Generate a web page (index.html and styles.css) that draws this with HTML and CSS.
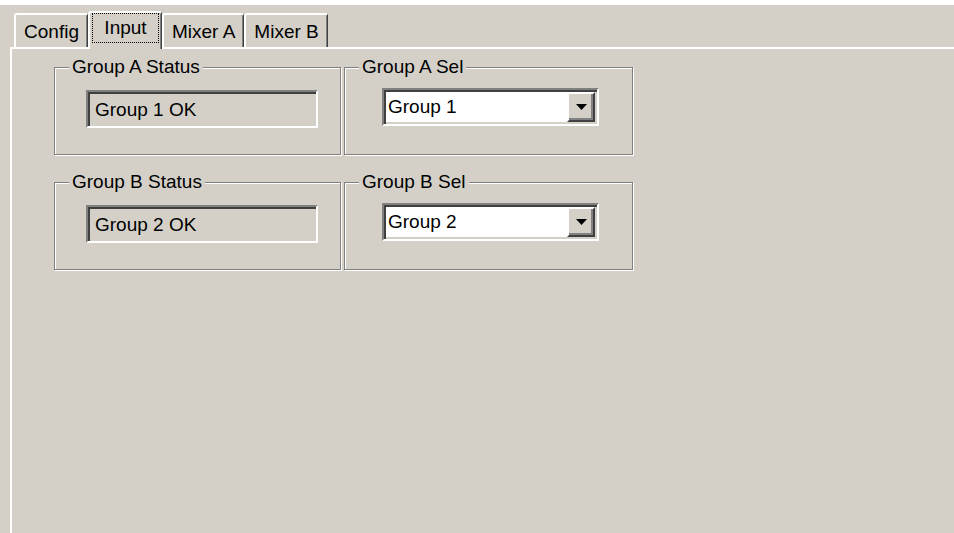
FILE: index.html
```html
<!DOCTYPE html>
<html lang="en">
<head>
<meta charset="utf-8">
<title>Input</title>
<link rel="stylesheet" href="styles.css">
</head>
<body>
<div class="top-edge"></div>

<div class="tabstrip">
  <div class="tab">Config</div>
  <div class="tab tab-active"><span class="tab-focus">Input</span></div>
  <div class="tab">Mixer A</div>
  <div class="tab">Mixer B</div>
</div>

<div class="panel">
  <div class="group-row">
    <fieldset class="group group-status">
      <legend>Group A Status</legend>
      <div class="status-field">Group 1 OK</div>
    </fieldset>
    <fieldset class="group group-sel">
      <legend>Group A Sel</legend>
      <div class="combo">
        <span class="combo-value">Group 1</span>
        <span class="combo-btn"><svg class="combo-arrow" width="11" height="6" viewBox="0 0 11 6"><path d="M0 0h11L5.5 6z"/></svg></span>
      </div>
    </fieldset>
  </div>

  <div class="group-row">
    <fieldset class="group group-status">
      <legend>Group B Status</legend>
      <div class="status-field">Group 2 OK</div>
    </fieldset>
    <fieldset class="group group-sel">
      <legend>Group B Sel</legend>
      <div class="combo">
        <span class="combo-value">Group 2</span>
        <span class="combo-btn"><svg class="combo-arrow" width="11" height="6" viewBox="0 0 11 6"><path d="M0 0h11L5.5 6z"/></svg></span>
      </div>
    </fieldset>
  </div>
</div>
</body>
</html>
```

FILE: styles.css
```css
html, body {
  height: 100%;
}

body {
  margin: 0;
  background: #d4d0c8;
  color: #000;
  font: 19px/22px "Liberation Sans", Arial, sans-serif;
  display: flex;
  flex-direction: column;
  overflow: hidden;
}

.top-edge {
  flex: none;
  height: 5px;
  background: #fff;
}

/* tab strip */
.tabstrip {
  flex: none;
  display: flex;
  align-items: flex-end;
  margin-top: 6px;
  padding-left: 14px;
}

.tab {
  box-sizing: border-box;
  min-width: 74px;
  padding: 6px 8px 4px;
  text-align: center;
  white-space: nowrap;
  background: #d4d0c8;
  border: 2px solid #fff;
  border-bottom: 0;
  border-right: 1px solid #404040;
  border-radius: 3px 3px 0 0;
  box-shadow: inset -1px 0 #808080;
}

.tab-active {
  position: relative;
  z-index: 1;
  padding: 0 2px 6px;
  margin-bottom: -2px;
}

.tab-focus {
  display: block;
  padding: 3px 9px;
  border: 1px dotted #000;
}

/* page body */
.panel {
  flex: 1;
  margin-left: 10px;
  padding: 7px 0 0 42px;
  border-top: 2px solid #fff;
  border-left: 2px solid #fff;
}

.group-row {
  display: flex;
  gap: 3px;
}

.group-row + .group-row {
  margin-top: 16px;
}

/* etched group box */
.group {
  box-sizing: border-box;
  min-width: 0;
  margin: 0;
  padding: 12px 0 26px;
  border: 1px solid #808080;
  box-shadow: inset 1px 1px #fff, 1px 1px #fff;
}

.group legend {
  margin-left: 14px;
  padding: 0 3px;
  background: #d4d0c8;
}

.group-status {
  width: 287px;
}

.group-sel {
  width: 289px;
  padding-top: 10px;
}

/* read-only status box */
.status-field {
  box-sizing: border-box;
  width: 232px;
  height: 38px;
  margin-left: 31px;
  padding: 2px 0 0 7px;
  display: flex;
  align-items: center;
  border: 2px solid;
  border-color: #808080 #fff #fff #808080;
  box-shadow: inset 2px 2px #404040;
}

/* drop-down list */
.combo {
  box-sizing: border-box;
  width: 217px;
  height: 38px;
  margin-left: 37px;
  display: flex;
  align-items: center;
  background: #fff;
  border: 2px solid;
  border-color: #808080 #fff #fff #808080;
  box-shadow: inset 2px 2px #404040, inset -2px -2px #d4d0c8;
}

.combo-value {
  flex: 1;
  padding-left: 4px;
}

.combo-btn {
  box-sizing: border-box;
  align-self: stretch;
  width: 28px;
  margin: 2px 2px 2px 0;
  display: flex;
  align-items: center;
  justify-content: center;
  background: #d4d0c8;
  border: 2px solid;
  border-color: #fff #404040 #404040 #fff;
  box-shadow: inset -2px -2px #808080;
}

.combo-arrow {
  display: block;
  fill: #000;
}
```
